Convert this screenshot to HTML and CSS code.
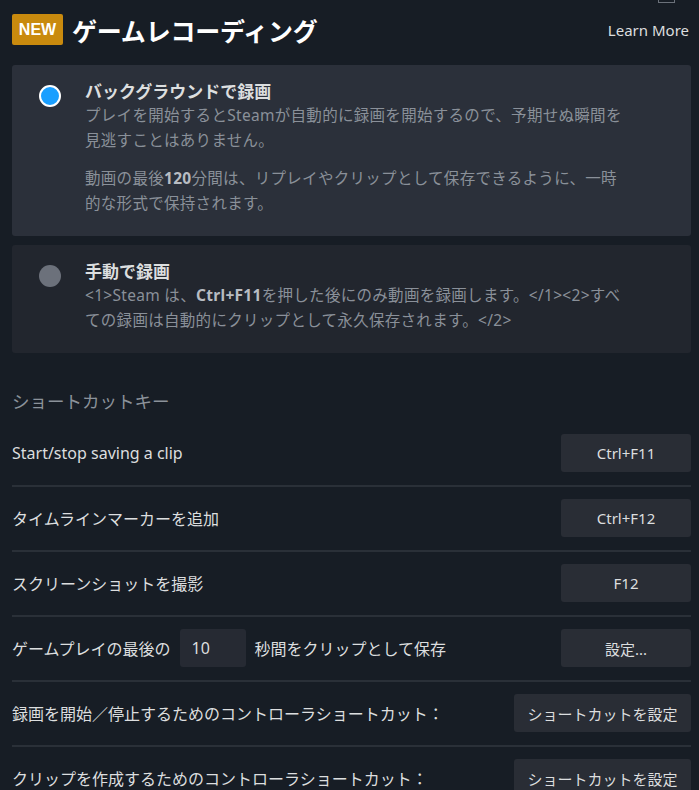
FILE: index.html
```html
<!doctype html>
<html lang="ja">
<head>
  <meta charset="utf-8" />
  <meta name="viewport" content="width=device-width,initial-scale=1" />
  <title>ゲームレコーディング</title>
  <link rel="stylesheet" href="styles.css">
</head>
<body>
<div class="wrap">
  <span class="winIcon"></span>
  <header>
    <div class="title">
      <span class="badge">NEW</span>
      <h1>ゲームレコーディング</h1>
    </div>
    <a class="learn">Learn More</a>
  </header>

  <div class="opt active">
    <span class="radio"></span>
    <div class="optText">
      <div class="optTitle">バックグラウンドで録画</div>
      <p>プレイを開始するとSteamが自動的に録画を開始するので、予期せぬ瞬間を<br>見逃すことはありません。</p>
      <p>動画の最後<b>120</b>分間は、リプレイやクリップとして保存できるように、一時<br>的な形式で保持されます。</p>
    </div>
  </div>

  <div class="opt">
    <span class="radio"></span>
    <div class="optText">
      <div class="optTitle">手動で録画</div>
      <p>&lt;1&gt;Steam は、<b>Ctrl+F11</b>を押した後にのみ動画を録画します。&lt;/1&gt;&lt;2&gt;すべ<br>ての録画は自動的にクリップとして永久保存されます。&lt;/2&gt;</p>
    </div>
  </div>

  <div class="section">ショートカットキー</div>

  <div class="rows">
    <div class="row">
      <span>Start/stop saving a clip</span>
      <button>Ctrl+F11</button>
    </div>
    <div class="row">
      <span>タイムラインマーカーを追加</span>
      <button>Ctrl+F12</button>
    </div>
    <div class="row">
      <span>スクリーンショットを撮影</span>
      <button>F12</button>
    </div>
    <div class="row">
      <div class="inline">
        <span>ゲームプレイの最後の</span>
        <input class="num" type="text" value="10">
        <span>秒間をクリップとして保存</span>
      </div>
      <button>設定...</button>
    </div>
    <div class="row">
      <span>録画を開始／停止するためのコントローラショートカット：</span>
      <button class="wide">ショートカットを設定</button>
    </div>
    <div class="row">
      <span>クリップを作成するためのコントローラショートカット：</span>
      <button class="wide">ショートカットを設定</button>
    </div>
  </div>
</div>
</body>
</html>
```

FILE: styles.css
```css
:root{
  --bg:#171d25;
  --card:#2b303a;
  --card2:#22262e;
  --text:#dcdedf;
  --muted:#8b929a;
  --line:#2a3038;
  --btn:#292d35;
  --blue:#1a9fff;
}

*{box-sizing:border-box}
body{
  margin:0;
  background:var(--bg);
  color:var(--text);
  font-family:"Noto Sans","Noto Sans CJK JP",sans-serif;
  overflow:hidden;
}

.wrap{
  position:relative;
  padding:0 8px 0 12px;
}

/* cropped window icon at the very top */
.winIcon{
  position:absolute;
  top:-12px;
  right:24px;
  width:17px;
  height:15px;
  border:1px solid #6b717a;
}

header{
  height:65px;
  display:flex;
  align-items:center;
  justify-content:space-between;
  padding-bottom:6px;
}
.title{display:flex;align-items:center;gap:9px}
.badge{
  background:#c98a0e;
  color:#fff;
  font-family:"Liberation Sans",Arial,sans-serif;
  font-weight:700;
  font-size:16px;
  width:51px;
  height:31px;
  border-radius:2px;
  display:flex;
  align-items:center;
  justify-content:center;
}
h1{
  margin:0;
  font-size:25px;
  font-weight:700;
  color:#fff;
  letter-spacing:-.2px;
}
.learn{font-size:15px;color:#dcdedf;padding-top:0;margin-right:2px}

/* ===== options ===== */
.opt{
  display:flex;
  gap:24px;
  background:var(--card2);
  border-radius:3px;
  padding:16px 20px 20px 27px;
  margin-bottom:9px;
}
.opt.active{background:var(--card);padding-bottom:20px}
.radio{
  flex:none;
  width:22px;
  height:22px;
  margin-top:4px;
  border-radius:50%;
  background:#6c717b;
}
.active .radio{
  background:var(--blue);
  border:2px solid #fff;
}
.optTitle{font-size:17px;font-weight:700;line-height:22px;color:#dcdedf}
.optText p{
  margin:0;
  font-size:15.5px;
  letter-spacing:.3px;
  line-height:25px;
  color:#8a9099;
  white-space:nowrap;
}
.optText p + p{margin-top:13px}
.optText b{color:#b8bcc2}

.section{
  font-size:17.5px;
  color:#8b929a;
  margin-top:35px;
  margin-bottom:21px;
}

/* ===== rows ===== */
.row{
  display:flex;
  align-items:center;
  justify-content:space-between;
  padding:12px 0 13px;
  border-bottom:2px solid var(--line);
  font-size:16px;
  color:#dcdedf;
}
.row:first-child{padding-top:0}
.inline{display:flex;align-items:center;gap:9px}
.num{
  width:66px;
  height:38px;
  border:none;
  border-radius:3px;
  background:#262a33;
  color:#dcdedf;
  font:inherit;
  padding:0 12px;
  outline:none;
}
button{
  width:130px;
  height:38px;
  border:none;
  border-radius:3px;
  background:var(--btn);
  color:#dcdedf;
  font:inherit;
  font-size:15px;
  cursor:pointer;
}
button.wide{width:177px}
```
